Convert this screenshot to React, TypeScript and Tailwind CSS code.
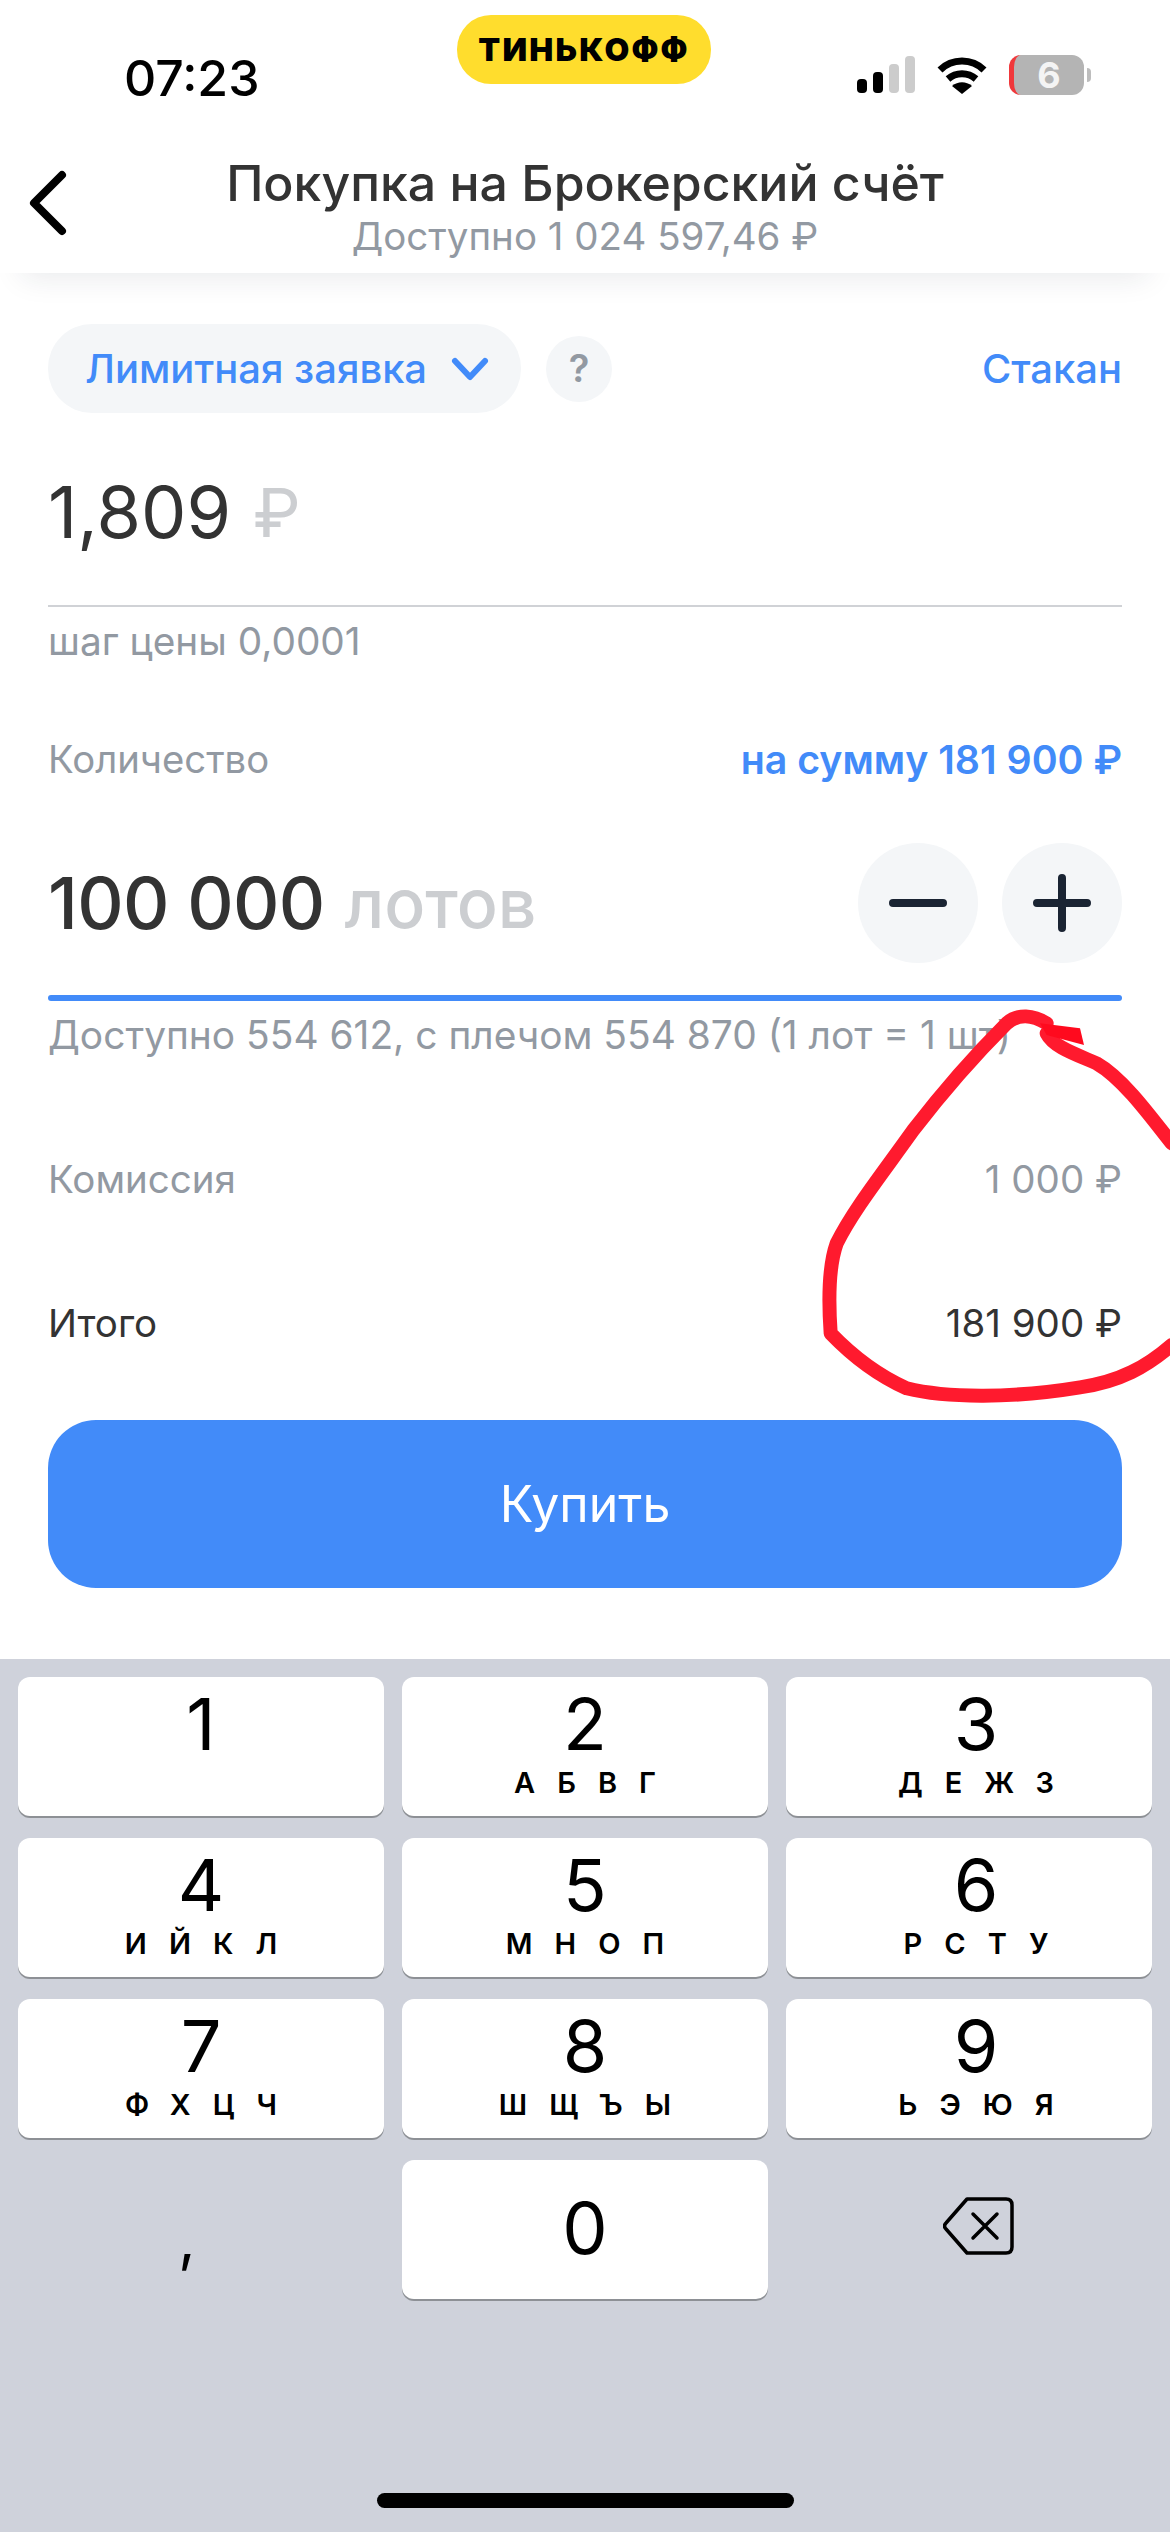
const F = { fontFamily: 'Inter, "Noto Sans", sans-serif' };

function Key({ d, l, right, center }: { d: string; l?: string; right?: boolean; center?: boolean }) {
  return (
    <div className={`h-[139px] bg-white rounded-[12px] shadow-[0_2px_0_#8d9095] flex flex-col items-center ${right ? 'pl-[14px]' : ''}`}>
      <div className={`h-[74px] text-[72px] leading-[74px] text-black ${center ? 'mt-[31px]' : 'mt-[10px]'}`}>{d}</div>
      {l && <div className="mt-[7px] text-[29px] leading-[30px] font-semibold text-black tracking-[0.76em] pl-[0.76em]">{l}</div>}
    </div>
  );
}

export default function App() {
  return (
    <div className="relative w-[1170px] h-[2532px] bg-white overflow-hidden flex flex-col" style={F}>
      {/* Status bar */}
      <div className="h-[138px] shrink-0 flex items-start justify-between pt-[49px] pl-[124px] pr-[79px]">
        <div className="text-[50px] leading-[58px] font-medium text-black">07:23</div>
        <div className="flex items-center gap-[22px] pt-[6px]">
          <svg width="58" height="38" viewBox="0 0 58 38">
            <rect x="0" y="23" width="10" height="14" rx="4" fill="#000" />
            <rect x="16" y="16" width="10" height="21" rx="4" fill="#000" />
            <rect x="32" y="8" width="10" height="29" rx="4" fill="#cccccc" />
            <rect x="48" y="0" width="10" height="37" rx="4" fill="#cccccc" />
          </svg>
          <svg width="50" height="38" viewBox="0 0 50 38" fill="none" stroke="#000" strokeWidth="7">
            <path d="M3 14C15 2 35 2 47 14" />
            <path d="M11 23C19 16 31 16 39 23" />
            <path d="M25 38L15 30C21 25 29 25 35 30Z" fill="#000" stroke="none" />
          </svg>
          <div className="flex items-center gap-[3px]">
            <div className="w-[75px] h-[40px] rounded-[12px] bg-[#b4b4b4] flex items-center justify-center border-l-[5px] border-[#f0383b]">
              <span className="text-[36px] leading-[40px] font-bold text-[#f4f4f4]">6</span>
            </div>
            <div className="w-[4px] h-[14px] rounded-r-full bg-[#bdbdbd]" />
          </div>
        </div>
      </div>
      {/* Pill */}
      <div className="absolute left-[457px] top-[15px] w-[254px] h-[69px] rounded-[34px] bg-[#ffdd2d] flex items-center justify-center">
        <span className="text-[32px] font-black text-black tracking-[0.07em] leading-none">ТИНЬКОФФ</span>
      </div>
      {/* Header */}
      <div className="relative h-[135px] shrink-0 pt-[15px] shadow-[0_26px_30px_-22px_rgba(30,40,60,0.10)] bg-white">
        <svg className="absolute left-[24px] top-[30px]" width="46" height="70" viewBox="0 0 46 70" fill="none" stroke="#000" strokeWidth="8" strokeLinecap="round" strokeLinejoin="round">
          <path d="M38 7L10 35L38 63" />
        </svg>
        <div className="text-center text-[50px] leading-[60px] font-medium text-[#333333]">Покупка на Брокерский счёт</div>
        <div className="text-center text-[38.5px] leading-[46px] text-[#9299a2]">Доступно 1 024 597,46 ₽</div>
      </div>
      {/* Content */}
      <div className="flex-1 flex flex-col px-[48px]">
        <div className="mt-[51px] flex items-center h-[89px]">
          <div className="w-[473px] h-[89px] rounded-[44px] bg-[#f4f6f8] flex items-center pl-[37px] gap-[24px]">
            <span className="text-[40px] font-medium text-[#428bf9] whitespace-nowrap">Лимитная заявка</span>
            <svg width="38" height="26" viewBox="0 0 38 26" fill="none" stroke="#428bf9" strokeWidth="6" strokeLinecap="round" strokeLinejoin="round">
              <path d="M4 5L19 21L34 5" />
            </svg>
          </div>
          <div className="ml-[25px] w-[66px] h-[66px] rounded-full bg-[#f4f6f8] flex items-center justify-center text-[38px] font-semibold text-[#9299a2]">?</div>
          <span className="ml-auto text-[40px] font-medium text-[#428bf9]">Стакан</span>
        </div>
        <div className="mt-[49px] h-[100px] flex items-center text-[72px] leading-[84px] text-[#333333]">
          1,809<span className="ml-[22px] text-[68px] text-[#ccced1]">₽</span>
        </div>
        <div className="mt-[43px] h-[2px] bg-[#d0d2d6]" />
        <div className="mt-[12px] text-[38.8px] leading-[44px] text-[#9299a2]">шаг цены 0,0001</div>
        <div className="mt-[74px] flex items-center justify-between h-[46px]">
          <span className="text-[38.3px] text-[#9299a2]">Количество</span>
          <span className="text-[39.3px] font-semibold text-[#428bf9]">на сумму 181 900 ₽</span>
        </div>
        <div className="mt-[60px] h-[120px] flex items-center">
          <span className="text-[72px] font-medium text-[#333333] tracking-[-0.01em]">100 000</span>
          <span className="ml-[20px] text-[68px] font-medium text-[#ccced1]">лотов</span>
          <div className="ml-auto flex gap-[24px]">
            <div className="w-[120px] h-[120px] rounded-full bg-[#f4f6f8] flex items-center justify-center">
              <svg width="60" height="60" viewBox="0 0 60 60" stroke="#1a2433" strokeWidth="8" strokeLinecap="round"><path d="M5 30H55" /></svg>
            </div>
            <div className="w-[120px] h-[120px] rounded-full bg-[#f4f6f8] flex items-center justify-center">
              <svg width="60" height="60" viewBox="0 0 60 60" stroke="#1a2433" strokeWidth="8" strokeLinecap="round"><path d="M5 30H55M30 5V55" /></svg>
            </div>
          </div>
        </div>
        <div className="mt-[32px] h-[6px] rounded-full bg-[#428bf9]" />
        <div className="mt-[12px] text-[38.9px] leading-[44px] text-[#9299a2] whitespace-nowrap">Доступно 554 612, с плечом 554 870 (1 лот = 1 шт)</div>
        <div className="mt-[101px] flex items-center justify-between h-[44px] text-[38.5px] text-[#9299a2]">
          <span>Комиссия</span><span>1 000 ₽</span>
        </div>
        <div className="mt-[100px] flex items-center justify-between h-[44px] text-[38.5px] text-[#333333]">
          <span>Итого</span><span>181 900 ₽</span>
        </div>
        <div className="mt-[74px] h-[168px] rounded-[48px] bg-[#428bf9] flex items-center justify-center text-[50px] text-white">Купить</div>
      </div>
      {/* Keyboard */}
      <div className="h-[873px] shrink-0 bg-[#cfd2db] flex flex-col pt-[18px] px-[18px]">
        <div className="grid grid-cols-3 gap-x-[18px] gap-y-[22px]">
          <Key d="1" />
          <Key d="2" l="АБВГ" />
          <Key d="3" l="ДЕЖЗ" right />
          <Key d="4" l="ИЙКЛ" />
          <Key d="5" l="МНОП" />
          <Key d="6" l="РСТУ" right />
          <Key d="7" l="ФХЦЧ" />
          <Key d="8" l="ШЩЪЫ" />
          <Key d="9" l="ЬЭЮЯ" right />
          <div className="flex justify-center items-center text-[60px] text-black pr-[28px] pt-[16px]">,</div>
          <Key d="0" center />
          <div className="flex justify-center pt-[36px] pl-[20px]">
            <svg width="72" height="60" viewBox="0 0 72 60" fill="none" stroke="#000" strokeWidth="3.5" strokeLinejoin="round" strokeLinecap="round">
              <path d="M24 3H63C67 3 69 5 69 9V51C69 55 67 57 63 57H24L3 33C1 31 1 29 3 27Z" />
              <path d="M30 18L54 42M54 18L30 42" />
            </svg>
          </div>
        </div>
        <div className="mt-auto mb-[24px] self-center w-[417px] h-[15px] rounded-full bg-black" />
      </div>
      {/* Red hand-drawn annotation */}
      <svg className="absolute left-[780px] top-[980px]" width="390" height="440" viewBox="0 0 1170 1320" fill="none" stroke="#ff1a2e" strokeWidth="42" strokeLinecap="round" strokeLinejoin="round">
        <path d="M800 130C760 105 715 100 680 130C600 210 500 320 400 450C300 590 220 690 170 790C145 860 145 960 152 1060C200 1110 280 1180 380 1225C500 1255 700 1255 900 1222C1020 1205 1100 1160 1175 1095" />
        <path d="M800 160C820 200 880 220 950 250C1020 290 1090 380 1175 490" />
        <path d="M780 130L900 145L912 195L800 165Z" fill="#ff0a1e" stroke="none" />
      </svg>
    </div>
  );
}
